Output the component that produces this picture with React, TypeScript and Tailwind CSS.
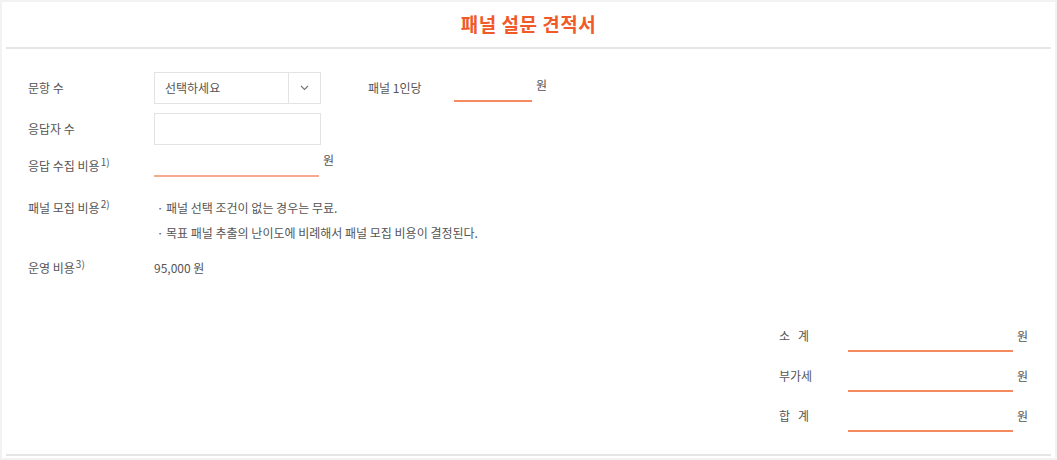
import React from 'react';

const font = { fontFamily: '"Noto Sans CJK KR", "Noto Sans", sans-serif' };

const Sup = ({ children }: { children: React.ReactNode }) => (
  <span className="text-[10px] relative -top-[5px] ml-[1px]">{children}</span>
);

const Label = ({ text, sup }: { text: string; sup?: string }) => (
  <div className="w-[126px] shrink-0 leading-[20px]">
    {text}
    {sup && <Sup>{sup}</Sup>}
  </div>
);

const SumRow = ({ label }: { label: string }) => (
  <div className="flex h-[32px]">
    <div className="w-[69px] pt-[6px] leading-[20px] whitespace-pre">{label}</div>
    <div className="w-[165px] h-[32px] border-b-2 border-[#f58a5f]" />
    <div className="ml-[4px] pt-[6px] leading-[20px]">원</div>
  </div>
);

const App = () => {
  return (
    <div
      className="w-full h-[460px] border-2 border-[#f2f2f2] bg-white text-[12px] text-[#555]"
      style={font}
    >
      <div className="mx-[4px] h-[454px] flex flex-col border-b-2 border-[#e6e6e6]">
        <div className="h-[47px] shrink-0 flex items-center justify-center border-b-2 border-[#e6e6e6]">
          <h1 className="text-[19px] font-bold text-[#f05a28] tracking-[0.5px]">패널 설문 견적서</h1>
        </div>

        <div className="pl-[22px] pr-[23px] flex flex-col">
          {/* 문항 수 */}
          <div className="mt-[23px] flex items-center h-[32px]">
            <Label text="문항 수" />
            <div className="w-[167px] h-[32px] flex border border-[#e3e3e3]">
              <div className="flex-1 pl-[10px] flex items-center">선택하세요</div>
              <div className="w-[32px] border-l border-[#e3e3e3] flex items-center justify-center">
                <svg width="9" height="6" viewBox="0 0 9 6" fill="none">
                  <path d="M1 1l3.5 3.5L8 1" stroke="#777" strokeWidth="1.2" />
                </svg>
              </div>
            </div>
            <div className="ml-[47px] w-[86px] leading-[20px]">패널 1인당</div>
            <div className="self-stretch flex">
              <div className="w-[78px] h-[30px] border-b-2 border-[#f58a5f]" />
              <div className="ml-[4px] pt-[3px] leading-[20px]">원</div>
            </div>
          </div>

          {/* 응답자 수 */}
          <div className="mt-[9px] flex items-center h-[32px]">
            <Label text="응답자 수" />
            <div className="w-[167px] h-[32px] border border-[#e3e3e3]" />
          </div>

          {/* 응답 수집 비용 */}
          <div className="flex items-end h-[32px]">
            <Label text="응답 수집 비용" sup="1)" />
            <div className="w-[165px] h-[32px] border-b-2 border-[#f6ab8e]" />
            <div className="ml-[4px] self-start pt-[5px] leading-[20px]">원</div>
          </div>

          {/* 패널 모집 비용 */}
          <div className="mt-[18px] flex">
            <div className="w-[126px] shrink-0 leading-[25px]">
              패널 모집 비용<Sup>2)</Sup>
            </div>
            <ul className="leading-[25px]">
              <li className="flex">
                <span className="w-[12px] text-center">·</span>
                <span>패널 선택 조건이 없는 경우는 무료.</span>
              </li>
              <li className="flex">
                <span className="w-[12px] text-center">·</span>
                <span>목표 패널 추출의 난이도에 비례해서 패널 모집 비용이 결정된다.</span>
              </li>
            </ul>
          </div>

          {/* 운영 비용 */}
          <div className="mt-[13px] flex">
            <Label text="운영 비용" sup="3)" />
            <div className="leading-[20px]">95,000 원</div>
          </div>

          {/* 합계 */}
          <div className="mt-[41px] flex justify-end">
            <div className="flex flex-col gap-[8px]">
              <SumRow label={'소   계'} />
              <SumRow label="부가세" />
              <SumRow label={'합   계'} />
            </div>
          </div>
        </div>
      </div>
    </div>
  );
};

export default App;
